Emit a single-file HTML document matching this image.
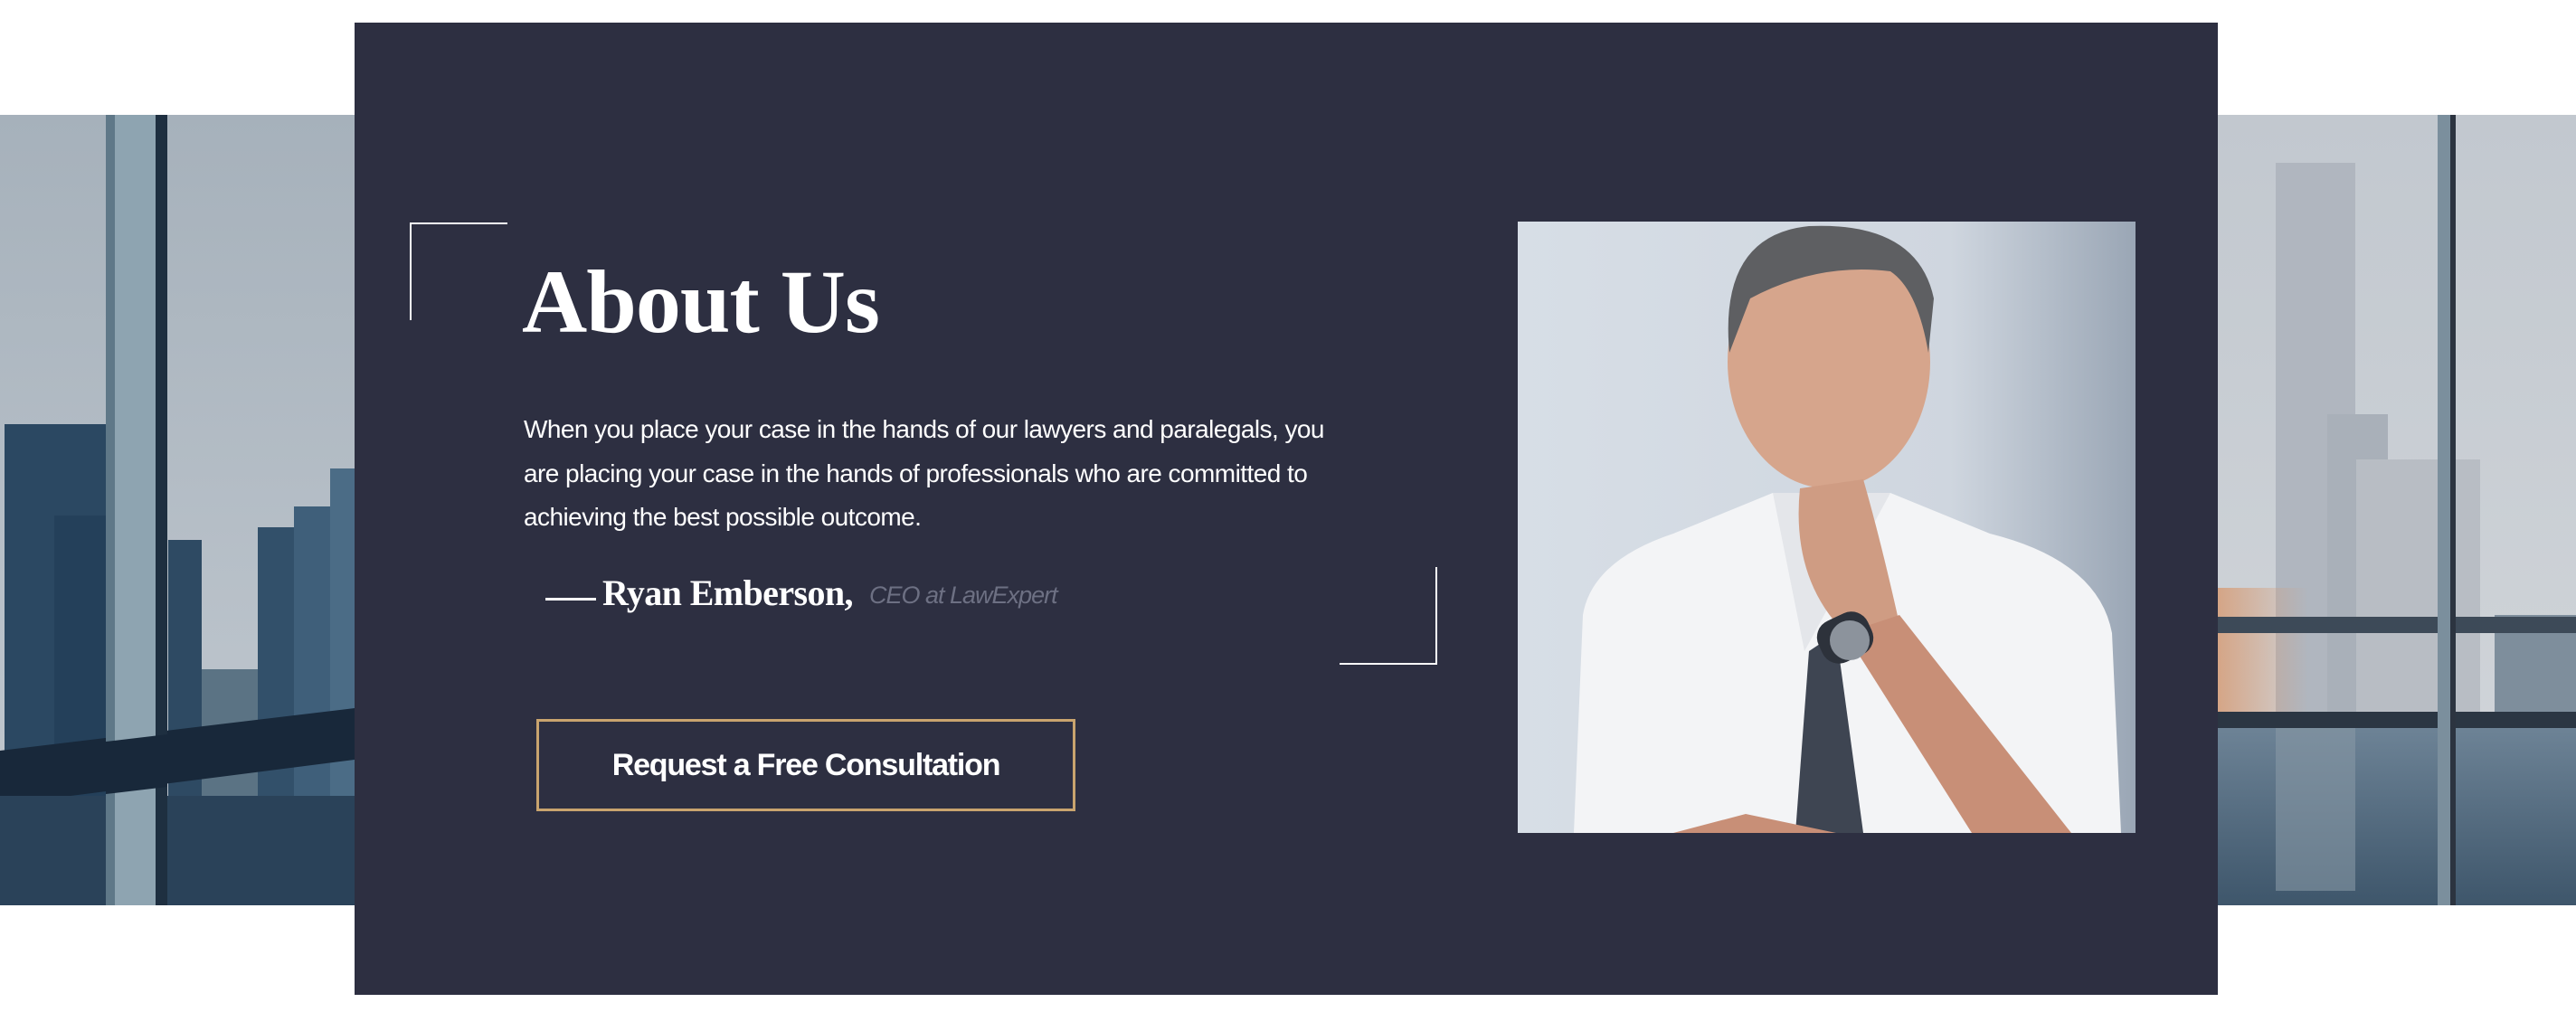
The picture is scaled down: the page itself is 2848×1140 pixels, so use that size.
<!DOCTYPE html>
<html><head><meta charset="utf-8"><style>
html,body{margin:0;padding:0;background:#fff;}
body{width:2848px;height:1140px;position:relative;overflow:hidden;font-family:"Liberation Sans",sans-serif;}
.abs{position:absolute;}
.panel{left:392px;top:25px;width:2060px;height:1075px;background:#2d2f41;}
h1{position:absolute;left:577px;top:274px;margin:0;font-family:"Liberation Serif",serif;font-weight:bold;font-size:100px;line-height:120px;color:#fff;letter-spacing:-1px;}
.p{position:absolute;left:579px;top:451px;color:#fff;font-size:28px;line-height:48.5px;letter-spacing:-0.55px;white-space:nowrap;}
.line{background:#fff;position:absolute;}
.auth{position:absolute;left:666px;top:632px;font-family:"Liberation Serif",serif;font-weight:bold;font-size:40px;color:#fff;letter-spacing:-0.6px;white-space:nowrap;}
.role{position:absolute;left:961px;top:643px;font-style:italic;font-size:27px;color:#6d7083;white-space:nowrap;letter-spacing:-1px;}
.btn{position:absolute;left:593px;top:795px;width:590px;height:96px;border:3px solid #c9a46e;color:#fff;font-weight:bold;font-size:34px;text-align:center;line-height:96px;letter-spacing:-1.2px;}
</style></head><body>
<svg class="abs" style="left:0;top:127px" width="392" height="874" viewBox="0 127 392 874">
<defs><linearGradient id="sk1" x1="0" y1="0" x2="0" y2="1"><stop offset="0" stop-color="#a6b1bb"/><stop offset="1" stop-color="#c3cad1"/></linearGradient></defs>
<rect x="0" y="127" width="392" height="874" fill="url(#sk1)"/>
<rect x="5" y="469" width="112" height="532" fill="#2b4862"/>
<rect x="60" y="570" width="57" height="431" fill="#24405a"/>
<rect x="186" y="597" width="37" height="404" fill="#2e4a63"/>
<rect x="223" y="740" width="62" height="261" fill="#5b7384"/>
<rect x="285" y="583" width="50" height="418" fill="#32506a"/>
<rect x="325" y="560" width="67" height="441" fill="#3f5f7a"/>
<rect x="365" y="518" width="27" height="483" fill="#4b6c86"/>
<polygon points="0,830 392,783 392,840 0,890" fill="#18283a"/>
<rect x="0" y="880" width="392" height="121" fill="#2a4259"/>
<rect x="117" y="127" width="68" height="874" fill="#8ea4b1"/>
<rect x="117" y="127" width="10" height="874" fill="#5f7888"/>
<rect x="172" y="127" width="13" height="874" fill="#1e2f40"/>
<polygon points="117,820 185,812 185,870 117,878" fill="#18283a"/>
</svg>
<svg class="abs" style="left:2452px;top:127px" width="396" height="874" viewBox="2452 127 396 874">
<defs><linearGradient id="sk2" x1="0" y1="0" x2="0" y2="1"><stop offset="0" stop-color="#c2c8cf"/><stop offset="1" stop-color="#d3d7db"/></linearGradient>
<linearGradient id="fl" x1="0" y1="0" x2="0" y2="1"><stop offset="0" stop-color="#6e8497"/><stop offset="1" stop-color="#3e566b"/></linearGradient>
<linearGradient id="gl" x1="0" y1="0" x2="1" y2="0"><stop offset="0" stop-color="#d79a72" stop-opacity=".8"/><stop offset="1" stop-color="#d79a72" stop-opacity="0"/></linearGradient></defs>
<rect x="2452" y="127" width="396" height="874" fill="url(#sk2)"/>
<rect x="2516" y="180" width="88" height="620" fill="#b0b6bf"/>
<rect x="2573" y="458" width="67" height="342" fill="#a9b0b9"/>
<rect x="2605" y="508" width="137" height="292" fill="#b8bdc4"/>
<rect x="2758" y="680" width="90" height="120" fill="#7e8e9c"/>
<rect x="2452" y="650" width="100" height="150" fill="url(#gl)"/>
<rect x="2452" y="682" width="396" height="18" fill="#3d4a58"/>
<rect x="2452" y="800" width="396" height="201" fill="url(#fl)"/>
<rect x="2516" y="805" width="88" height="180" fill="#8797a5" opacity=".6"/>
<rect x="2452" y="787" width="396" height="18" fill="#2b3643"/>
<rect x="2695" y="127" width="18" height="874" fill="#7b8f9d"/>
<rect x="2709" y="127" width="6" height="874" fill="#2c3440"/>
</svg>
<div class="abs panel"></div>
<div class="line" style="left:453px;top:246px;width:108px;height:2px"></div>
<div class="line" style="left:453px;top:246px;width:2px;height:108px"></div>
<div class="line" style="left:1481px;top:733px;width:108px;height:2px"></div>
<div class="line" style="left:1587px;top:627px;width:2px;height:108px"></div>
<h1>About Us</h1>
<div class="p">When you place your case in the hands of our lawyers and paralegals, you<br>are placing your case in the hands of professionals who are committed to<br>achieving the best possible outcome.</div>
<div class="line" style="left:603px;top:661px;width:56px;height:3px"></div>
<div class="auth">Ryan Emberson,</div>
<div class="role">CEO at LawExpert</div>
<div class="btn">Request a Free Consultation</div>
<svg class="abs" style="left:1678px;top:245px" width="683" height="676" viewBox="1678 245 683 676">
<defs><linearGradient id="bg" x1="0" y1="0" x2="1" y2="0"><stop offset="0" stop-color="#d7dee6"/><stop offset=".7" stop-color="#cfd6df"/><stop offset="1" stop-color="#9aa6b5"/></linearGradient></defs>
<rect x="1678" y="245" width="683" height="676" fill="url(#bg)"/>
<path d="M1740 921 L1750 680 Q1760 620 1850 590 L1960 545 L2090 545 L2200 590 Q2320 620 2335 700 L2345 921 Z" fill="#f3f4f6"/>
<path d="M1960 545 L1995 720 L2090 545 Z" fill="#e4e6ea"/>
<path d="M2000 720 L2030 700 L2060 921 L1985 921 Z" fill="#3e4552"/>
<ellipse cx="2022" cy="400" rx="112" ry="140" fill="#d6a58c"/>
<path d="M1912 390 Q1900 260 2000 250 Q2120 245 2138 330 L2132 390 Q2120 320 2090 300 Q2010 290 1935 330 Z" fill="#5e5f62"/>
<path d="M1990 540 Q1980 640 2040 700 L2100 690 Q2080 600 2060 530 Z" fill="#cf9c83"/>
<path d="M2040 700 L2100 680 L2290 921 L2180 921 Z" fill="#c88f77"/>
<path d="M1850 921 L1930 900 L2030 921 Z" fill="#c88f77"/>
<rect x="2010" y="680" width="60" height="50" rx="20" fill="#2d323b" transform="rotate(-25 2040 705)"/>
<circle cx="2045" cy="708" r="22" fill="#8c939c"/>
</svg>
</body></html>
